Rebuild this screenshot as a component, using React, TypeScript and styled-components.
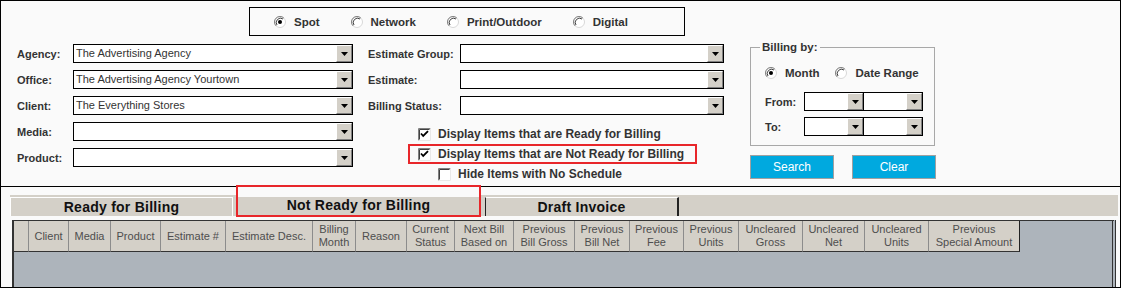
import React from "react";
import styled, { createGlobalStyle } from "styled-components";

const GlobalStyle = createGlobalStyle`
  body {
    margin: 0;
    background: #ffffff;
    font-family: "Liberation Sans", Arial, sans-serif;
  }
`;

const Frame = styled.div`
  width: 1121px;
  height: 288px;
  display: flex;
  flex-direction: column;
  background: #fafafa;
  color: #333;
  font-size: 11px;
  overflow: hidden;
`;

const TopPanel = styled.div`
  height: 187px;
  flex-shrink: 0;
  box-sizing: border-box;
  border: 1px solid #000;
  padding: 6px 0 0 16px;
`;

const MediaBox = styled.div`
  display: flex;
  align-items: center;
  gap: 31px;
  width: 436px;
  height: 29px;
  box-sizing: border-box;
  margin-left: 232px;
  padding-left: 24px;
  border: 1px solid #000;
`;

const RadioItem = styled.label`
  display: flex;
  align-items: center;
  gap: 8px;
  font-weight: bold;
  font-size: 11.5px;
  color: #333;
  white-space: nowrap;
`;

const FormArea = styled.div`
  display: flex;
  margin-top: 8px;
`;

const Column = styled.div<{ $offset?: number }>`
  display: flex;
  flex-direction: column;
  gap: 7px;
  margin-left: ${(p) => p.$offset || 0}px;
`;

const FieldRow = styled.div`
  display: flex;
  align-items: center;
  height: 19px;
`;

const Label = styled.span<{ $width: number }>`
  width: ${(p) => p.$width}px;
  font-weight: bold;
  color: #333;
  white-space: nowrap;
`;

const Combo = styled.div<{ $width: number }>`
  display: flex;
  width: ${(p) => p.$width}px;
  height: 19px;
  box-sizing: border-box;
  border: 1px solid #000;
  background: #fff;
`;

const ComboText = styled.span`
  flex: 1;
  padding-left: 2px;
  line-height: 17px;
  color: #333;
  white-space: nowrap;
  overflow: hidden;
`;

const DropButton = styled.span`
  width: 16px;
  height: 17px;
  box-sizing: border-box;
  display: flex;
  align-items: center;
  justify-content: center;
  background: #d4d0c8;
  border-top: 1px solid #fff;
  border-left: 1px solid #fff;
  border-right: 1px solid #808080;
  border-bottom: 1px solid #808080;
`;

const CheckList = styled.div`
  display: flex;
  flex-direction: column;
  margin-top: 2px;
`;

const CheckRow = styled.div<{ $indent?: number; $highlight?: boolean }>`
  align-self: flex-start;
  display: flex;
  align-items: center;
  gap: 7px;
  height: 20px;
  box-sizing: border-box;
  margin-left: 40px;
  padding: 0 11px 0 ${(p) => 8 + (p.$indent || 0)}px;
  border: 2px solid ${(p) => (p.$highlight ? "#e8262a" : "transparent")};
  font-size: 12px;
  font-weight: bold;
  color: #333;
  white-space: nowrap;
`;

const RightColumn = styled.div`
  display: flex;
  flex-direction: column;
  margin-left: 26px;
  margin-top: -3px;
`;

const BillingBox = styled.fieldset`
  width: 185px;
  height: 105px;
  box-sizing: border-box;
  margin: 0;
  padding: 0 0 0 14px;
  border: 1px solid #a8a8a8;
  display: flex;
  flex-direction: column;
`;

const Legend = styled.legend`
  margin-left: -5px;
  padding: 0 2px;
  font-weight: bold;
  font-size: 11.5px;
  line-height: 13px;
  color: #333;
`;

const BillingRadios = styled.div`
  display: flex;
  align-items: center;
  gap: 16px;
  height: 14px;
  margin-top: 12px;
`;

const DateRows = styled.div`
  display: flex;
  flex-direction: column;
  gap: 6px;
  margin-top: 12px;
`;

const DatePair = styled.div`
  display: flex;
  & > div + div {
    margin-left: -1px;
  }
`;

const ButtonRow = styled.div`
  display: flex;
  gap: 18px;
  margin-top: 9px;
`;

const BlueButton = styled.button`
  width: 84px;
  height: 24px;
  box-sizing: border-box;
  border: 1px solid #a0a0a0;
  background: #00a9df;
  color: #fff;
  font-family: "Liberation Sans", Arial, sans-serif;
  font-size: 12px;
  padding: 0;
`;

const BottomPanel = styled.div`
  flex: 1;
  min-height: 0;
  box-sizing: border-box;
  border: 1px solid #000;
  border-top: none;
  padding: 8px 2px 0 9px;
  display: flex;
  flex-direction: column;
`;

const TabStrip = styled.div`
  display: flex;
  align-items: flex-end;
  height: 21px;
  flex-shrink: 0;
  background: #d4d0c8;
`;

const Tab = styled.div<{ $width: number; $kind: "plain" | "active" | "last" }>`
  width: ${(p) => p.$width}px;
  flex-shrink: 0;
  box-sizing: border-box;
  display: flex;
  align-items: center;
  justify-content: center;
  font-size: 14px;
  letter-spacing: 0.25px;
  font-weight: bold;
  color: #111;
  height: ${(p) => (p.$kind === "active" ? 32 : 19)}px;
  margin-bottom: ${(p) => (p.$kind === "active" ? -1 : 0)}px;
  ${(p) =>
    p.$kind === "plain" &&
    `border: 1px solid #fff; border-bottom: none; margin-right: 3px;`}
  ${(p) =>
    p.$kind === "active" &&
    `border: 2px solid #e8262a; padding: 8px 0 0; margin-right: 4px;
     background: linear-gradient(to bottom, #fafafa 0 10px, #d4d0c8 10px);`}
  ${(p) =>
    p.$kind === "last" &&
    `border-top: 1px solid #fff; border-left: 1px solid #222; border-right: 2px solid #222;`}
`;

const Grid = styled.div`
  flex: 1;
  margin: 4px 0 0 2px;
  width: 1104px;
  box-sizing: border-box;
  background: #adb4bb;
  border-top: 1px solid #333;
  border-left: 2px solid #333;
  border-right: 4px double #333;
`;

const HeaderRow = styled.div`
  display: flex;
  height: 31px;
`;

const HeaderCell = styled.div<{ $width: number; $last?: boolean }>`
  width: ${(p) => p.$width}px;
  box-sizing: border-box;
  display: flex;
  align-items: center;
  justify-content: center;
  text-align: center;
  background: #d4d0c8;
  border-right: 1px solid ${(p) => (p.$last ? "#222" : "#8c8c8c")};
  border-bottom: 1px solid #333;
  color: #4e4e4e;
  font-size: 11px;
  line-height: 13px;
`;

const RadioIcon: React.FC<{ checked?: boolean }> = ({ checked }) => (
  <svg width="12" height="12" viewBox="0 0 12 12">
    <circle cx="6" cy="6" r="5.5" fill="#fff" stroke="#d8d8d8" />
    <path d="M2.1 9.9 A5.5 5.5 0 0 1 9.9 2.1" fill="none" stroke="#808080" />
    <path d="M3 9 A4.3 4.3 0 0 1 9 3" fill="none" stroke="#404040" />
    {checked && <circle cx="6" cy="6" r="2" fill="#000" />}
  </svg>
);

const CheckIcon: React.FC<{ checked?: boolean }> = ({ checked }) => (
  <svg width="13" height="13" viewBox="0 0 13 13">
    <rect x="0" y="0" width="13" height="13" fill="#fff" />
    <path d="M0.5 12.5 V0.5 H12.5" fill="none" stroke="#808080" />
    <path d="M1.5 11.5 V1.5 H11.5" fill="none" stroke="#404040" />
    <path d="M0.5 12.5 H12.5 V0.5" fill="none" stroke="#e8e8e8" />
    {checked && <path d="M3 5.5 L5.2 8 L10 3.2" fill="none" stroke="#000" strokeWidth="1.8" />}
  </svg>
);

const Arrow: React.FC = () => (
  <svg width="7" height="4" viewBox="0 0 7 4">
    <polygon points="0,0 7,0 3.5,4" fill="#000" />
  </svg>
);

const Select: React.FC<{ width: number; value?: string }> = ({ width, value }) => (
  <Combo $width={width}>
    <ComboText>{value}</ComboText>
    <DropButton>
      <Arrow />
    </DropButton>
  </Combo>
);

const leftFields = [
  { label: "Agency:", value: "The Advertising Agency" },
  { label: "Office:", value: "The Advertising Agency Yourtown" },
  { label: "Client:", value: "The Everything Stores" },
  { label: "Media:", value: "" },
  { label: "Product:", value: "" },
];

const middleFields = ["Estimate Group:", "Estimate:", "Billing Status:"];

const columns: Array<{ title: React.ReactNode; width: number }> = [
  { title: "", width: 15 },
  { title: "Client", width: 40 },
  { title: "Media", width: 42 },
  { title: "Product", width: 50 },
  { title: "Estimate #", width: 65 },
  { title: "Estimate Desc.", width: 87 },
  { title: <>Billing<br />Month</>, width: 43 },
  { title: "Reason", width: 51 },
  { title: <>Current<br />Status</>, width: 48 },
  { title: <>Next Bill<br />Based on</>, width: 59 },
  { title: <>Previous<br />Bill Gross</>, width: 61 },
  { title: <>Previous<br />Bill Net</>, width: 55 },
  { title: <>Previous<br />Fee</>, width: 54 },
  { title: <>Previous<br />Units</>, width: 55 },
  { title: <>Uncleared<br />Gross</>, width: 64 },
  { title: <>Uncleared<br />Net</>, width: 62 },
  { title: <>Uncleared<br />Units</>, width: 64 },
  { title: <>Previous<br />Special Amount</>, width: 91 },
];

const App: React.FC = () => {
  return (
    <Frame>
      <GlobalStyle />
      <TopPanel>
        <MediaBox>
          <RadioItem>
            <RadioIcon checked />
            Spot
          </RadioItem>
          <RadioItem>
            <RadioIcon />
            Network
          </RadioItem>
          <RadioItem>
            <RadioIcon />
            Print/Outdoor
          </RadioItem>
          <RadioItem>
            <RadioIcon />
            Digital
          </RadioItem>
        </MediaBox>

        <FormArea>
          <Column>
            {leftFields.map((f) => (
              <FieldRow key={f.label}>
                <Label $width={56}>{f.label}</Label>
                <Select width={280} value={f.value} />
              </FieldRow>
            ))}
          </Column>

          <Column $offset={15}>
            {middleFields.map((label) => (
              <FieldRow key={label}>
                <Label $width={92}>{label}</Label>
                <Select width={264} />
              </FieldRow>
            ))}
            <CheckList>
              <CheckRow>
                <CheckIcon checked />
                Display Items that are Ready for Billing
              </CheckRow>
              <CheckRow $highlight>
                <CheckIcon checked />
                Display Items that are Not Ready for Billing
              </CheckRow>
              <CheckRow $indent={20}>
                <CheckIcon />
                Hide Items with No Schedule
              </CheckRow>
            </CheckList>
          </Column>

          <RightColumn>
            <BillingBox>
              <Legend>Billing by:</Legend>
              <BillingRadios>
                <RadioItem>
                  <RadioIcon checked />
                  Month
                </RadioItem>
                <RadioItem>
                  <RadioIcon />
                  Date Range
                </RadioItem>
              </BillingRadios>
              <DateRows>
                <FieldRow>
                  <Label $width={39}>From:</Label>
                  <DatePair>
                    <Select width={60} />
                    <Select width={60} />
                  </DatePair>
                </FieldRow>
                <FieldRow>
                  <Label $width={39}>To:</Label>
                  <DatePair>
                    <Select width={60} />
                    <Select width={60} />
                  </DatePair>
                </FieldRow>
              </DateRows>
            </BillingBox>
            <ButtonRow>
              <BlueButton>Search</BlueButton>
              <BlueButton>Clear</BlueButton>
            </ButtonRow>
          </RightColumn>
        </FormArea>
      </TopPanel>

      <BottomPanel>
        <TabStrip>
          <Tab $width={223} $kind="plain">Ready for Billing</Tab>
          <Tab $width={245} $kind="active">Not Ready for Billing</Tab>
          <Tab $width={194} $kind="last">Draft Invoice</Tab>
        </TabStrip>
        <Grid>
          <HeaderRow>
            {columns.map((c, i) => (
              <HeaderCell key={i} $width={c.width} $last={i === columns.length - 1}>
                {c.title}
              </HeaderCell>
            ))}
          </HeaderRow>
        </Grid>
      </BottomPanel>
    </Frame>
  );
};

export default App;
